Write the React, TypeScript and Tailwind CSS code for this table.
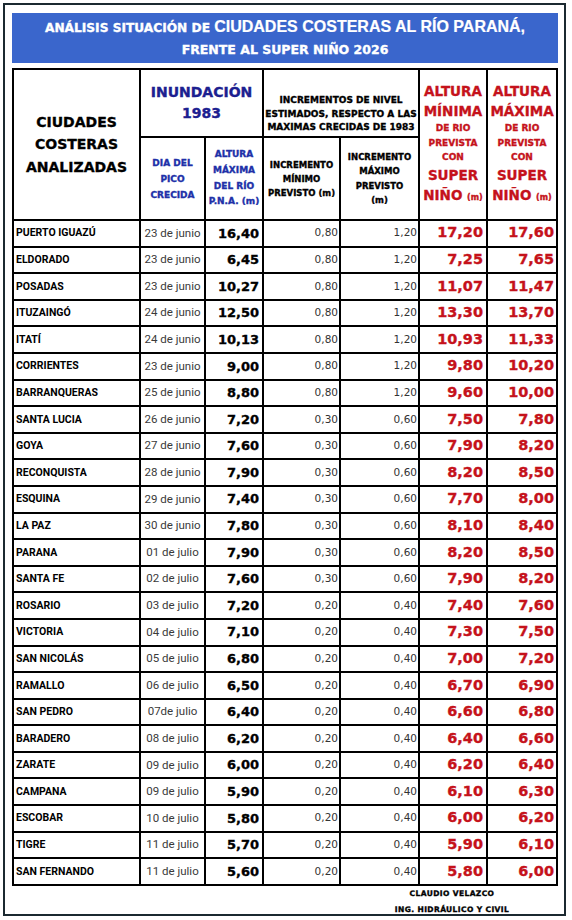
import React from "react";

const rows: string[][] = [
  ["PUERTO IGUAZÚ", "23 de junio", "16,40", "0,80", "1,20", "17,20", "17,60"],
  ["ELDORADO", "23 de junio", "6,45", "0,80", "1,20", "7,25", "7,65"],
  ["POSADAS", "23 de junio", "10,27", "0,80", "1,20", "11,07", "11,47"],
  ["ITUZAINGÓ", "24 de junio", "12,50", "0,80", "1,20", "13,30", "13,70"],
  ["ITATÍ", "24 de junio", "10,13", "0,80", "1,20", "10,93", "11,33"],
  ["CORRIENTES", "23 de junio", "9,00", "0,80", "1,20", "9,80", "10,20"],
  ["BARRANQUERAS", "25 de junio", "8,80", "0,80", "1,20", "9,60", "10,00"],
  ["SANTA LUCIA", "26 de junio", "7,20", "0,30", "0,60", "7,50", "7,80"],
  ["GOYA", "27 de junio", "7,60", "0,30", "0,60", "7,90", "8,20"],
  ["RECONQUISTA", "28 de junio", "7,90", "0,30", "0,60", "8,20", "8,50"],
  ["ESQUINA", "29 de junio", "7,40", "0,30", "0,60", "7,70", "8,00"],
  ["LA PAZ", "30 de junio", "7,80", "0,30", "0,60", "8,10", "8,40"],
  ["PARANA", "01 de julio", "7,90", "0,30", "0,60", "8,20", "8,50"],
  ["SANTA FE", "02 de julio", "7,60", "0,30", "0,60", "7,90", "8,20"],
  ["ROSARIO", "03 de julio", "7,20", "0,20", "0,40", "7,40", "7,60"],
  ["VICTORIA", "04 de julio", "7,10", "0,20", "0,40", "7,30", "7,50"],
  ["SAN NICOLÁS", "05 de julio", "6,80", "0,20", "0,40", "7,00", "7,20"],
  ["RAMALLO", "06 de julio", "6,50", "0,20", "0,40", "6,70", "6,90"],
  ["SAN PEDRO", "07de julio", "6,40", "0,20", "0,40", "6,60", "6,80"],
  ["BARADERO", "08 de julio", "6,20", "0,20", "0,40", "6,40", "6,60"],
  ["ZARATE", "09 de julio", "6,00", "0,20", "0,40", "6,20", "6,40"],
  ["CAMPANA", "09 de julio", "5,90", "0,20", "0,40", "6,10", "6,30"],
  ["ESCOBAR", "10 de julio", "5,80", "0,20", "0,40", "6,00", "6,20"],
  ["TIGRE", "11 de julio", "5,70", "0,20", "0,40", "5,90", "6,10"],
  ["SAN FERNANDO", "11 de julio", "5,60", "0,20", "0,40", "5,80", "6,00"],
];

// DejaVu bold + a thin stroke to get close to the Arial Black look
const heavy = "font-['DejaVu_Sans',sans-serif] font-bold [-webkit-text-stroke:0.35px]";

function RedHeader({ second }: { second: string }) {
  return (
    <div className={`row-span-2 flex flex-col items-center justify-center bg-white text-center text-[#c5121b] ${heavy}`}>
      <span className="text-[13.5px] leading-[20px]">ALTURA</span>
      <span className="text-[13.5px] leading-[20px]">{second}</span>
      <span className="text-[9px] leading-[15px]">DE RIO</span>
      <span className="text-[9px] leading-[14px]">PREVISTA</span>
      <span className="text-[9px] leading-[15px]">CON</span>
      <span className="text-[13.5px] leading-[20px]">SUPER</span>
      <span className="text-[13.5px] leading-[20px]">
        NIÑO <span className="text-[8px]">(m)</span>
      </span>
    </div>
  );
}

export default function App() {
  return (
    <div className="bg-white p-[3px]">
      <div className="w-[563px] border-2 border-[#1b2930] pl-[7px] pr-[6px] pt-[8px]">
        <div className={`flex h-[50px] flex-col items-center justify-center bg-[#3a66cc] text-white ${heavy}`}>
          <div className="leading-[21px]">
            <span className="text-[12.2px]">ANÁLISIS SITUACIÓN DE </span>
            <span className="font-['Liberation_Sans',sans-serif] text-[16px] [-webkit-text-stroke:0.2px]">
              CIUDADES COSTERAS AL RÍO PARANÁ,
            </span>
          </div>
          <div className="text-[12.5px] leading-[21px]">FRENTE AL SUPER NIÑO 2026</div>
        </div>

        <div className="mt-[5px] grid grid-cols-[125px_63px_56px_75px_77px_66px_68px] grid-rows-[66px_81px_repeat(25,24.6px)] gap-[2px] bg-black p-[2px]">
          <div className={`row-span-2 flex items-center justify-center bg-white text-center text-[14px] leading-[22.5px] text-black ${heavy}`}>
            CIUDADES
            <br />
            COSTERAS
            <br />
            ANALIZADAS
          </div>
          <div className={`col-span-2 flex items-center justify-center bg-white text-center text-[14px] leading-[21px] text-[#1c2090] ${heavy}`}>
            INUNDACIÓN
            <br />
            1983
          </div>
          <div className={`col-span-2 bg-white pt-[24px] text-center text-[9px] leading-[13.5px] text-black ${heavy}`}>
            INCREMENTOS DE NIVEL
            <br />
            ESTIMADOS, RESPECTO A LAS
            <br />
            MAXIMAS CRECIDAS DE 1983
          </div>
          <RedHeader second="MÍNIMA" />
          <RedHeader second="MÁXIMA" />
          <div className={`flex items-center justify-center bg-white text-center text-[9px] leading-[16px] text-[#2030a8] ${heavy}`}>
            DIA DEL
            <br />
            PICO
            <br />
            CRECIDA
          </div>
          <div className={`flex items-center justify-center bg-white text-center text-[9px] leading-[15.7px] text-[#2030a8] ${heavy}`}>
            ALTURA
            <br />
            MÁXIMA
            <br />
            DEL RÍO
            <br />
            P.N.A. (m)
          </div>
          <div className={`flex items-center justify-center bg-white text-center text-[8.5px] leading-[14px] text-black ${heavy}`}>
            INCREMENTO
            <br />
            MÍNIMO
            <br />
            PREVISTO (m)
          </div>
          <div className={`flex items-center justify-center bg-white text-center text-[8.5px] leading-[14.5px] text-black ${heavy}`}>
            INCREMENTO
            <br />
            MÁXIMO
            <br />
            PREVISTO
            <br />
            (m)
          </div>

          {rows.map((r) => (
            <React.Fragment key={r[0]}>
              <div className="flex items-center bg-white pl-[2px] font-['Roboto',sans-serif] text-[10.5px] font-bold text-black">
                {r[0]}
              </div>
              <div className="flex items-center justify-center bg-white font-['Roboto',sans-serif] text-[11.5px] text-[#3a3a3a]">
                {r[1]}
              </div>
              <div className={`flex items-center justify-end bg-white pr-[3px] text-[13px] text-black ${heavy}`}>
                {r[2]}
              </div>
              <div className="flex items-center justify-end bg-white pr-[1px] font-['DejaVu_Sans',sans-serif] text-[10.5px] text-[#333]">
                {r[3]}
              </div>
              <div className="flex items-center justify-end bg-white pr-[1px] font-['DejaVu_Sans',sans-serif] text-[10.5px] text-[#333]">
                {r[4]}
              </div>
              <div className={`flex items-center justify-end bg-white pr-[3px] text-[14.5px] text-[#c5121b] ${heavy}`}>
                {r[5]}
              </div>
              <div className={`flex items-center justify-end bg-white pr-[2px] text-[14.5px] text-[#c5121b] ${heavy}`}>
                {r[6]}
              </div>
            </React.Fragment>
          ))}
        </div>

        <div className="flex h-[28px] justify-end">
          <div className={`w-[212px] text-center text-[7.5px] leading-[16px] tracking-[0.4px] text-black ${heavy}`}>
            CLAUDIO VELAZCO
            <br />
            ING. HIDRÁULICO Y CIVIL
          </div>
        </div>
      </div>
    </div>
  );
}
